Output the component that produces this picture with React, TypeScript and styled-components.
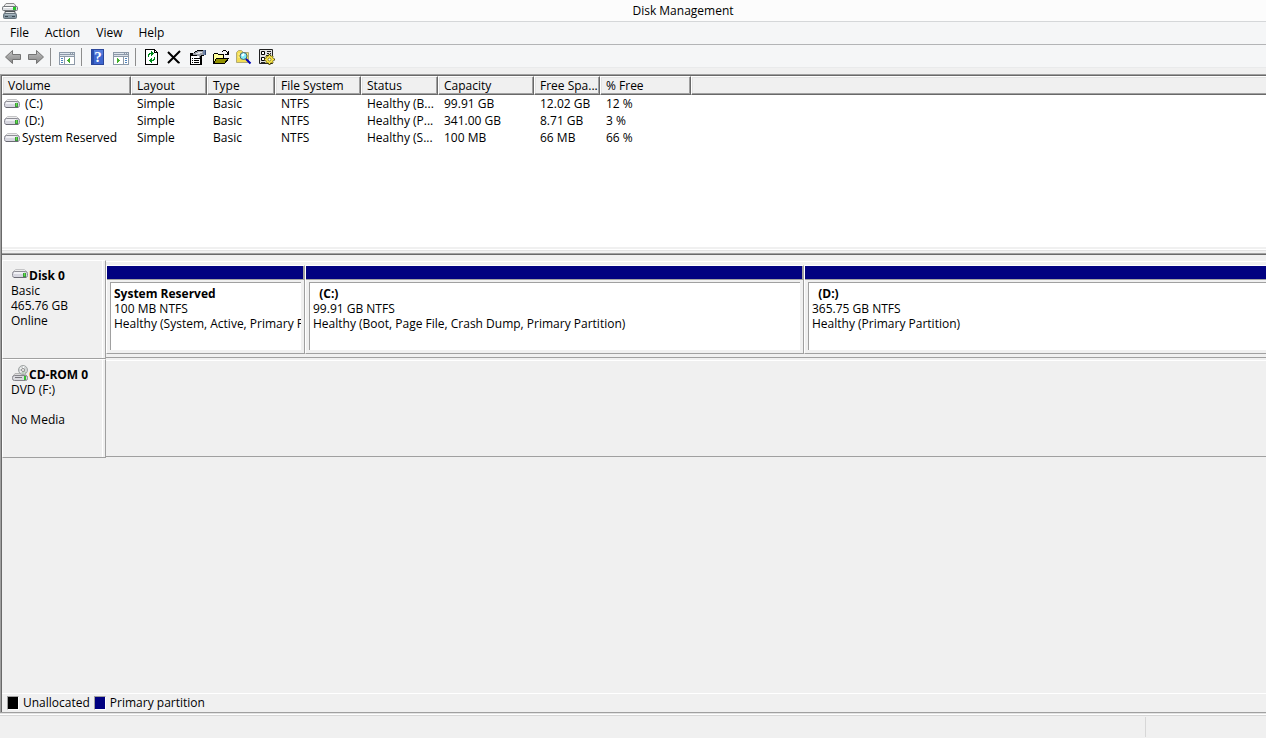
import React from "react";
import styled, { createGlobalStyle } from "styled-components";

const GlobalStyle = createGlobalStyle`
  *, *::before, *::after { box-sizing: border-box; }
  html, body, #root { height: 100%; margin: 0; }
  body {
    background: #f0f0f0;
    color: #000;
    font-family: "Open Sans", "Noto Sans", sans-serif;
    font-size: 12px;
    line-height: 15px;
    overflow: hidden;
  }
  button { font: inherit; color: inherit; background: none; border: 0; padding: 0; margin: 0; }
  svg { display: block; flex: none; }
`;

const Window = styled.div`
  display: flex;
  flex-direction: column;
  height: 100vh;
`;

const TitleBar = styled.header`
  display: grid;
  grid-template-columns: 100px 1fr;
  height: 22px;
  flex: none;
  padding: 3px 2px 0;
  background: #fcfcfc;
  border-bottom: 1px solid #d5d7d9;
`;

const Title = styled.h1`
  margin: 0;
  font-size: 12px;
  font-weight: 400;
  line-height: 15px;
  text-align: center;
`;

const MenuBar = styled.nav`
  display: flex;
  height: 23px;
  flex: none;
  padding-left: 2px;
  background: #f5f6f7;
  border-bottom: 1px solid #b3b4b6;
`;

const MenuItem = styled.button`
  padding: 0 8px 1px;
`;

const ToolBar = styled.div`
  display: flex;
  height: 23px;
  flex: none;
  padding-top: 2px;
  padding-left: 2px;
  background: #f5f6f7;
  border-bottom: 1px solid #e9eaeb;
`;

const ToolButton = styled.button`
  display: flex;
  align-items: center;
  width: 23px;
  padding-left: 3px;
`;

const ToolSeparator = styled.span`
  width: 8px;
  margin: 1px 0;
  padding-left: 2px;
  &::before {
    content: "";
    display: block;
    width: 1px;
    height: 100%;
    background: #8d8d8d;
  }
`;

const Client = styled.main`
  display: flex;
  flex-direction: column;
  flex: 1;
  min-height: 0;
  margin-top: 6px;
  border: solid #a0a0a0;
  border-width: 1px 0 1px 1px;
`;

const ClientInner = styled.div`
  display: flex;
  flex-direction: column;
  flex: 1;
  min-height: 0;
  border: solid #696969;
  border-width: 1px 0 0 1px;
`;

const VolumePane = styled.section`
  flex: none;
  height: 171px;
  background: #fff;
  overflow: hidden;
`;

const VolumeTable = styled.table`
  width: 100%;
  table-layout: fixed;
  border-collapse: separate;
  border-spacing: 0;
`;

const Column = styled.col<{ $width?: number }>`
  width: ${(p) => (p.$width ? `${p.$width}px` : "auto")};
`;

const HeadCell = styled.th`
  height: 19px;
  padding: 0 0 0 5px;
  background: #f0f0f0;
  border: 1px solid #fff;
  border-right-color: #696969;
  border-bottom-color: #696969;
  box-shadow: inset -1px -1px 0 #a0a0a0, inset 1px 1px 0 #e3e3e3;
  font-weight: 400;
  text-align: left;
  white-space: nowrap;
  overflow: hidden;
  &:last-child {
    border-right: 0;
    box-shadow: inset 0 -1px 0 #a0a0a0, inset 1px 1px 0 #e3e3e3;
  }
`;

const Cell = styled.td`
  height: 17px;
  padding: 0 0 0 6px;
  line-height: 17px;
  white-space: nowrap;
`;

const NameCell = styled(Cell)`
  padding-left: 2px;
`;

const VolumeName = styled.span`
  display: flex;
  align-items: center;
  gap: 2px;
  white-space: pre;
`;

const Splitter = styled.div`
  flex: none;
  height: 8px;
  background: #f0f0f0;
  border-bottom: 1px solid #696969;
  box-shadow: inset 0 -1px 0 #a0a0a0;
  padding-top: 2px;
  &::before {
    content: "";
    display: block;
    height: 2px;
    border-top: 1px solid #fff;
    border-bottom: 1px solid #e3e3e3;
  }
`;

const DiskPane = styled.section`
  flex: 1;
  min-height: 0;
  padding-top: 5px;
  overflow: hidden;
`;

const DiskRow = styled.article`
  display: grid;
  grid-template-columns: 104px 1fr;
  height: 99px;
`;

const DiskLabel = styled.div`
  border: 1px solid #fff;
  border-right-color: #a0a0a0;
  border-bottom-color: #a0a0a0;
  box-shadow: inset -2px 0 0 #f0f0f0, inset -3px 0 0 #fff;
  padding: 7px 8px 0;
`;

const DiskName = styled.h2`
  display: flex;
  align-items: center;
  gap: 1px;
  margin: 0;
  padding-left: 1px;
  height: 15px;
  font-size: 12px;
  font-weight: 700;
  line-height: 15px;
  white-space: nowrap;
  svg {
    margin-bottom: 3px;
  }
`;

const TextLine = styled.p`
  margin: 0;
  min-height: 15px;
  white-space: nowrap;
`;

const DiskTrack = styled.div`
  display: flex;
  min-width: 0;
  height: 97px;
  margin-top: 1px;
  padding-top: 3px;
  border-top: 1px solid #fff;
  border-bottom: 1px solid #a0a0a0;
  overflow: hidden;
`;

const Partition = styled.div<{ $width?: number }>`
  display: flex;
  flex-direction: column;
  flex: ${(p) => (p.$width ? `0 0 ${p.$width}px` : "1 0 0")};
  min-width: 0;
  height: 89px;
  border: 1px solid #fff;
  border-right: ${(p) => (p.$width ? "1px solid #a0a0a0" : "0")};
  border-bottom-color: #a0a0a0;
`;

const PartitionColor = styled.div<{ $last?: boolean }>`
  flex: none;
  height: 14px;
  background: #000080;
  border: solid #a0a0a0;
  border-width: 0 ${(p) => (p.$last ? 0 : 1)}px 1px 0;
`;

const PartitionBody = styled.div<{ $last?: boolean }>`
  flex: 1;
  margin: 2px ${(p) => (p.$last ? 0 : 3)}px 3px 3px;
  padding: 3px 0 0 3px;
  background: #fff;
  border: solid #a0a0a0;
  border-width: 1px 0 0 1px;
  overflow: hidden;
`;

const PartitionName = styled.h3`
  margin: 0;
  font-size: 12px;
  font-weight: 700;
  line-height: 15px;
  white-space: pre;
`;

const Legend = styled.footer`
  display: flex;
  align-items: center;
  gap: 4px;
  flex: none;
  height: 19px;
  padding-left: 5px;
  padding-bottom: 1px;
  border-top: 1px solid #fff;
`;

const Swatch = styled.span<{ $color: string }>`
  width: 12px;
  height: 14px;
  background: ${(p) => p.$color};
  border: 1px solid #fff;
  border-top-color: #a0a0a0;
  border-left-color: #a0a0a0;
`;

const StatusBar = styled.div`
  display: flex;
  justify-content: flex-end;
  flex: none;
  height: 25px;
  padding: 1px 0;
  border-top: 1px solid #e3e3e3;
  box-shadow: inset 0 1px 0 #fff, inset 0 2px 0 #d7d7d7;
`;

const StatusSection = styled.div`
  width: 121px;
  margin-top: 2px;
  border-left: 1px solid #d7d7d7;
`;

function Drive() {
  return (
    <svg width="16" height="10" viewBox="0 0 16 10" aria-hidden="true">
      <path d="M3.500 .5h9l2.500 2.500H1z" fill="#e6e6e6" stroke="#c4c4c6" />
      <path d="M3 1.500h10" stroke="#ededed" />
      <rect x=".5" y="2.500" width="15" height="6" rx="2" fill="#d6d6df" stroke="#8e8e96" />
      <path d="M2 3.500h10M2 4.500h9" stroke="#f0f0f4" />
      <path d="M2 8.500h12" stroke="#6b6b74" />
      <path d="M11 4h3v4h-3z" fill="#3c9a3c" />
      <path d="M12 4h1v3h-1z" fill="#61df43" />
    </svg>
  );
}

function CdDrive() {
  return (
    <svg width="16" height="17" viewBox="0 0 16 17" aria-hidden="true">
      <path d="M3 8.500h10l2 3H1z" fill="#dcdcdc" stroke="#b4b4b4" />
      <circle cx="11" cy="5" r="4.500" fill="#d2d6d6" stroke="#a0a4a4" />
      <path d="M8 3l2 1M8 7l2-1M12 1l-1 3" stroke="#fff" />
      <path d="M12 6l2 2M11 7v2" stroke="#a5c9a5" />
      <circle cx="11" cy="5" r="1.500" fill="#fff" stroke="#8c8c8c" />
      <rect x=".5" y="10.500" width="15" height="5" rx="2" fill="#d9d9de" stroke="#85858b" />
      <path d="M3 12.500h7" stroke="#77777d" />
      <path d="M12 11h2v4h-2z" fill="#31bd31" />
    </svg>
  );
}

function AppIcon() {
  return (
    <svg width="16" height="17" viewBox="0 0 16 17" aria-hidden="true">
      <path d="M4 .5h8l3 4H1z" fill="#ececec" stroke="#8a8a8a" />
      <rect x=".5" y="3.500" width="15" height="4" rx="1" fill="#dcdfe2" stroke="#74787c" />
      <path d="M2 4.500h9" stroke="#fff" />
      <path d="M11 4h3v3h-3z" fill="#24c424" />
      <path d="M3 8.500h10v3H3z" fill="#e4e7e9" stroke="#4c5256" />
      <rect x="1.500" y="10.500" width="13" height="5" rx="1" fill="#8496a1" stroke="#66747d" />
      <path d="M3 11.500h10" stroke="#a9b8c1" />
      <path d="M3 13.500h3M10 13.500h3" stroke="#3c4a53" />
    </svg>
  );
}

function Arrow({ forward }: { forward?: boolean }) {
  const id = forward ? "arrow-forward" : "arrow-back";
  return (
    <svg width="16" height="16" viewBox="0 0 16 16" aria-hidden="true">
      <defs>
        <linearGradient id={id} x1="0" y1="0" x2="0" y2="1">
          <stop offset="0" stopColor="#c4c4c4" />
          <stop offset=".5" stopColor="#a3a3a3" />
          <stop offset="1" stopColor="#858585" />
        </linearGradient>
      </defs>
      <path
        d={forward ? "M15.500 8L8.500 1.500V5.500H.5V10.500H8.500V14.500Z" : "M.5 8L7.500 1.500V5.500H15.500V10.500H7.500V14.500Z"}
        fill={`url(#${id})`}
        stroke="#747474"
        strokeLinejoin="round"
      />
    </svg>
  );
}

function PaneIcon({ right }: { right?: boolean }) {
  return (
    <svg width="16" height="16" viewBox="0 0 16 16" aria-hidden="true" shapeRendering="crispEdges">
      <rect x="0" y="3" width="16" height="13" fill="#8d99a8" />
      <path d="M1 4h10v1H1zM12 4h1v1h-1zM14 4h1v1h-1z" fill="#dfe6ee" />
      <path d="M1 6h14v1H1z" fill="#dbe1e9" />
      <path d="M1 8h14v7H1z" fill="#fff" />
      {right ? (
        <>
          <path d="M10 8h1v7h-1z" fill="#8d99a8" />
          <path d="M12 9h2v1h-2zM12 11h2v1h-2zM12 13h2v1h-2z" fill="#4d83bd" />
          <path d="M4 9h1v5H4zM5 10h1v3H5zM6 11h1v1H6z" fill="#43b02c" />
        </>
      ) : (
        <>
          <path d="M5 8h1v7H5z" fill="#8d99a8" />
          <path d="M2 9h2v1H2zM2 11h2v1H2zM2 13h2v1H2z" fill="#4d83bd" />
          <path d="M10 9h1v5h-1zM9 10h1v3H9zM8 11h1v1H8z" fill="#43b02c" />
        </>
      )}
    </svg>
  );
}

function HelpIcon() {
  return (
    <svg width="16" height="16" viewBox="0 0 16 16" aria-hidden="true">
      <rect x="1.500" y=".5" width="12" height="15" fill="#3e66cf" stroke="#2b469b" />
      <path d="M2 1h2v14H2z" fill="#294eae" />
      <path d="M4 1h9v5H4z" fill="#527bdc" />
      <text x="8" y="13" fill="#fff" fontFamily="Liberation Serif, serif" fontSize="15" fontWeight="700" textAnchor="middle">?</text>
    </svg>
  );
}

function RefreshIcon() {
  return (
    <svg width="16" height="16" viewBox="0 0 16 16" aria-hidden="true" shapeRendering="crispEdges">
      <path d="M1.500.5h9l3 3v12h-12z" fill="#fff" stroke="#000" />
      <path d="M10.500.5v3h3" fill="none" stroke="#000" />
      <path d="M4 8V5h1V4h2V2h1v1h1v1h1v1H9v1H8v1H7V5H6v1H5v2zM11 8v3h-1v1H8v2H7v-1H6v-1H5v-1h1v-1h1V9h1v2h1v-1h1V8z" fill="#008a1c" />
    </svg>
  );
}

function DeleteIcon() {
  return (
    <svg width="16" height="16" viewBox="0 0 16 16" aria-hidden="true">
      <path d="M1 3L12 14M13 2L1 14" stroke="#000" strokeWidth="2" fill="none" />
      <path d="M11 13l2 1" stroke="#000" />
    </svg>
  );
}

function PropertiesIcon() {
  return (
    <svg width="16" height="16" viewBox="0 0 16 16" aria-hidden="true" shapeRendering="crispEdges">
      <path d="M0 4h12v12H0z" fill="#000" />
      <path d="M1 7h9v8H1z" fill="#fff" />
      <path d="M2 9h1v1H2zM4 9h5v1H4zM2 11h1v1H2zM4 11h5v1H4zM2 13h1v1H2zM4 13h5v1H4z" fill="#000" />
      <path d="M3 4h2V3h2V2h6v4h-2v2h-1v1H9V7H5V6H3z" fill="#9b9fa8" />
      <path d="M5 2h2V1h6v1H7v1H5zM4 3h1v1H4zM4 6h3v1H4zM9 9h1v1H9zM10 7h1v2h-1zM11 6h3v1h-3z" fill="#000" />
      <path d="M6 4h4v1H6zM8 3h4v1H8z" fill="#e1e4ea" />
      <path d="M13 1h3v5h-3z" fill="#6d83a8" />
      <path d="M15 1h1v5h-1z" fill="#31456d" />
    </svg>
  );
}

function OpenIcon() {
  return (
    <svg width="16" height="16" viewBox="0 0 16 16" aria-hidden="true" shapeRendering="crispEdges">
      <path d="M.5 14.500v-9l1-1h3l1 1h5v3" fill="#ffff9c" stroke="#000" />
      <path d="M.5 14.500l3-5h12l-4 5z" fill="#929100" stroke="#000" />
      <path d="M9 2h1v1H9zM10 1h3v1h-3zM13 2h1v1h-1zM14 3h1v1h-1zM15 2h1v4h-4V5h2V4h1z" fill="#000" />
    </svg>
  );
}

function FindIcon() {
  return (
    <svg width="16" height="16" viewBox="0 0 16 16" aria-hidden="true">
      <path d="M.5 13.500v-10l2-2h3l2 2h5v10z" fill="#f2dc55" stroke="#b0aa77" />
      <path d="M2 5h10M2 8h5" stroke="#fff49e" />
      <circle cx="7.500" cy="7" r="3.500" fill="#7eecfa" stroke="#4d6570" />
      <path d="M6 7l2-2" stroke="#fff" strokeWidth="2" />
      <path d="M10 10l4.500 4.500" stroke="#0000b8" strokeWidth="2" />
    </svg>
  );
}

function SettingsIcon() {
  return (
    <svg width="16" height="16" viewBox="0 0 16 16" aria-hidden="true">
      <path d="M.5.5h13v14H.5z" fill="#e4e4e4" stroke="#222" />
      <path d="M2.500 2.500h3v3h-3zM2.500 8.500h3v3h-3z" fill="#fff" stroke="#000" />
      <path d="M8 2.500h4M8 4.500h2M11 4.500h1M2 13.500h4M7 6.500h5" stroke="#222" />
      <circle cx="10.500" cy="10.500" r="4" fill="#5f560a" />
      <path d="M10.500 5v11M5 10.500h11M7 7l7 7M14 7l-7 7" stroke="#5f560a" strokeWidth="2" />
      <circle cx="10.500" cy="10.500" r="3.500" fill="#fbe84c" />
      <path d="M10.500 6v9M6 10.500h9M7.500 7.500l6 6M13.500 7.500l-6 6" stroke="#fbe84c" />
      <circle cx="10.500" cy="10.500" r="1.500" fill="#fff" stroke="#8a8020" />
    </svg>
  );
}

const menus = ["File", "Action", "View", "Help"];

const toolGroups = [
  [
    { label: "Back", icon: <Arrow /> },
    { label: "Forward", icon: <Arrow forward /> },
  ],
  [{ label: "Show/Hide Console Tree", icon: <PaneIcon /> }],
  [
    { label: "Help topics", icon: <HelpIcon /> },
    { label: "Show/Hide Action Pane", icon: <PaneIcon right /> },
  ],
  [
    { label: "Refresh", icon: <RefreshIcon /> },
    { label: "Delete", icon: <DeleteIcon /> },
    { label: "Properties", icon: <PropertiesIcon /> },
    { label: "Open", icon: <OpenIcon /> },
    { label: "Explore", icon: <FindIcon /> },
    { label: "Settings", icon: <SettingsIcon /> },
  ],
];

const columns = [
  { title: "Volume", width: 129 },
  { title: "Layout", width: 76 },
  { title: "Type", width: 68 },
  { title: "File System", width: 86 },
  { title: "Status", width: 77 },
  { title: "Capacity", width: 96 },
  { title: "Free Spa...", width: 66 },
  { title: "% Free", width: 91 },
];

const volumes = [
  [" (C:)", "Simple", "Basic", "NTFS", "Healthy (B...", "99.91 GB", "12.02 GB", "12 %"],
  [" (D:)", "Simple", "Basic", "NTFS", "Healthy (P...", "341.00 GB", "8.71 GB", "3 %"],
  ["System Reserved", "Simple", "Basic", "NTFS", "Healthy (S...", "100 MB", "66 MB", "66 %"],
];

const partitions = [
  { name: "System Reserved", size: "100 MB NTFS", status: "Healthy (System, Active, Primary P", width: 199 },
  { name: "  (C:)", size: "99.91 GB NTFS", status: "Healthy (Boot, Page File, Crash Dump, Primary Partition)", width: 499 },
  { name: "  (D:)", size: "365.75 GB NTFS", status: "Healthy (Primary Partition)" },
];

export default function App() {
  return (
    <>
      <GlobalStyle />
      <Window>
        <TitleBar>
          <AppIcon />
          <Title>Disk Management</Title>
        </TitleBar>
        <MenuBar>
          {menus.map((m) => (
            <MenuItem key={m}>{m}</MenuItem>
          ))}
        </MenuBar>
        <ToolBar>
          {toolGroups.map((group, i) => (
            <React.Fragment key={i}>
              {i > 0 && <ToolSeparator />}
              {group.map((tool) => (
                <ToolButton key={tool.label} aria-label={tool.label}>
                  {tool.icon}
                </ToolButton>
              ))}
            </React.Fragment>
          ))}
        </ToolBar>
        <Client>
          <ClientInner>
            <VolumePane>
              <VolumeTable>
                <colgroup>
                  {columns.map((c) => (
                    <Column key={c.title} $width={c.width} />
                  ))}
                  <Column />
                </colgroup>
                <thead>
                  <tr>
                    {columns.map((c) => (
                      <HeadCell key={c.title}>{c.title}</HeadCell>
                    ))}
                    <HeadCell />
                  </tr>
                </thead>
                <tbody>
                  {volumes.map(([name, ...rest]) => (
                    <tr key={name}>
                      <NameCell>
                        <VolumeName>
                          <Drive />
                          <span>{name}</span>
                        </VolumeName>
                      </NameCell>
                      {rest.map((value, i) => (
                        <Cell key={i}>{value}</Cell>
                      ))}
                    </tr>
                  ))}
                </tbody>
              </VolumeTable>
            </VolumePane>
            <Splitter />
            <DiskPane>
              <DiskRow>
                <DiskLabel>
                  <DiskName>
                    <Drive />
                    Disk 0
                  </DiskName>
                  <TextLine>Basic</TextLine>
                  <TextLine>465.76 GB</TextLine>
                  <TextLine>Online</TextLine>
                </DiskLabel>
                <DiskTrack>
                  {partitions.map((p) => (
                    <Partition key={p.name} $width={p.width}>
                      <PartitionColor $last={!p.width} />
                      <PartitionBody $last={!p.width}>
                        <PartitionName>{p.name}</PartitionName>
                        <TextLine>{p.size}</TextLine>
                        <TextLine>{p.status}</TextLine>
                      </PartitionBody>
                    </Partition>
                  ))}
                </DiskTrack>
              </DiskRow>
              <DiskRow>
                <DiskLabel>
                  <DiskName>
                    <CdDrive />
                    CD-ROM 0
                  </DiskName>
                  <TextLine>DVD (F:)</TextLine>
                  <TextLine />
                  <TextLine>No Media</TextLine>
                </DiskLabel>
                <DiskTrack />
              </DiskRow>
            </DiskPane>
            <Legend>
              <Swatch $color="#000" />
              <span>Unallocated</span>
              <Swatch $color="#000080" />
              <span>Primary partition</span>
            </Legend>
          </ClientInner>
        </Client>
        <StatusBar>
          <StatusSection />
        </StatusBar>
      </Window>
    </>
  );
}
